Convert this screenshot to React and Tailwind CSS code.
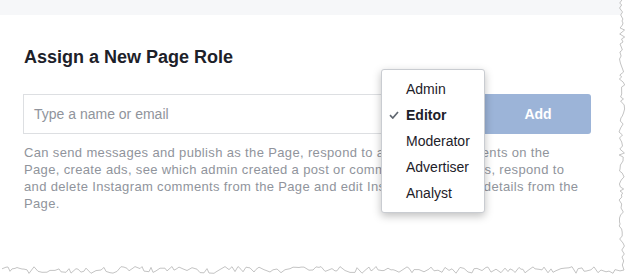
import React from "react";

const ROLES = ["Admin", "Editor", "Moderator", "Advertiser", "Analyst"];

// seeded wobble for the torn paper edge
function tornPath() {
  let s = 7;
  const rnd = () => {
    s = (s * 9301 + 49297) % 233280;
    return s / 233280;
  };
  const pts = [];
  for (let y = 0; y <= 266; y += 2 + Math.floor(rnd() * 3)) {
    pts.push([622 + (rnd() - 0.5) * 6, y]);
  }
  pts.push([624, 270]);
  for (let x = 620; x >= 0; x -= 2 + Math.floor(rnd() * 4)) {
    pts.push([x, 270 + (rnd() - 0.5) * 7]);
  }
  return "M" + pts.map((p) => p[0].toFixed(1) + " " + p[1].toFixed(1)).join(" L");
}

function RoleMenu() {
  return (
    <div className="absolute left-[381px] top-[69px] w-[104px] rounded-[3px] border border-[#c9ccd1] bg-white py-[6px] shadow-[0_3px_8px_rgba(0,0,0,0.25)]">
      {ROLES.map((role) => (
        <div key={role} className="relative flex h-[26px] items-center pl-[24px] text-[14px] text-[#1d2129]">
          {role === "Editor" && (
            <svg className="absolute left-[7px] top-[9px]" width="10" height="8" viewBox="0 0 10 8">
              <path d="M1 4.2 L3.8 7 L9 1" fill="none" stroke="#606770" strokeWidth="1.7" />
            </svg>
          )}
          <span className={role === "Editor" ? "font-bold" : ""}>{role}</span>
        </div>
      ))}
    </div>
  );
}

export default function App() {
  return (
    <div className="relative h-[279px] w-[630px] overflow-hidden bg-white font-['Liberation_Sans',Arial,sans-serif]">
      <div className="h-[15px] w-[621px] bg-[#f6f7f9]" />
      <div className="pl-[23px] pt-[31px]">
        <h2 className="pl-px text-[18px] font-bold leading-[22px] text-[#1d2129]">Assign a New Page Role</h2>
        <div className="mt-[26px] flex h-[40px] w-[568px]">
          <div className="flex flex-1 items-center border border-r-0 border-[#dddfe2] pl-[10px] text-[14px] text-[#90949c]">
            Type a name or email
          </div>
          <div className="flex w-[106px] items-center justify-center rounded-r-[3px] bg-[#9cb4d8] text-[14px] font-bold text-white">
            Add
          </div>
        </div>
        <p className="mt-[10px] pl-px text-[13px] leading-[17px] tracking-[0.35px] whitespace-nowrap text-[#90949c]">
          Can send messages and publish as the Page, respond to and delete comments on the
          <br />
          Page, create ads, see which admin created a post or comment, view insights, respond to
          <br />
          and delete Instagram comments from the Page and edit Instagram account details from the
          <br />
          Page.
        </p>
      </div>
      <RoleMenu />
      <svg className="pointer-events-none absolute left-0 top-0" width="630" height="279">
        <path d={tornPath()} fill="none" stroke="#c4c4c4" strokeWidth="1" />
      </svg>
    </div>
  );
}
